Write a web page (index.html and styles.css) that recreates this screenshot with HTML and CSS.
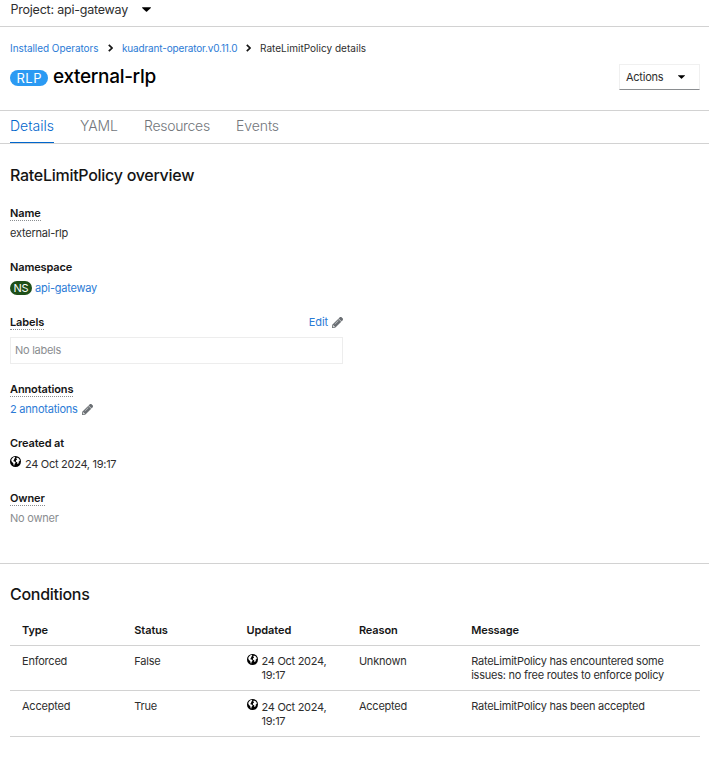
FILE: index.html
```html
<!DOCTYPE html>
<html lang="en">
<head>
<meta charset="utf-8">
<title>external-rlp · Details</title>
<link rel="stylesheet" href="styles.css">
</head>
<body>
<svg class="sprite" aria-hidden="true">
  <symbol id="caret" viewBox="0 0 10 5"><path d="M.4 0h9.2q.6.2.2.7L5.6 4.7q-.6.5-1.2 0L.2.7Q-.2.2.4 0z"/></symbol>
  <symbol id="angle" viewBox="0 0 5 8"><path d="M.8.8 4 4 .8 7.2" fill="none" stroke="currentColor" stroke-width="1.7"/></symbol>
  <symbol id="pencil" viewBox="0 0 512 512"><path d="M497.900 142.100l-46.100 46.100c-4.700 4.700-12.300 4.700-17 0l-111-111c-4.700-4.700-4.700-12.300 0-17l46.100-46.100c18.700-18.700 49.100-18.700 67.900 0l60.100 60.100c18.800 18.700 18.800 49.100 0 68zM284.200 99.800L21.600 362.400.400 483.900c-2.900 16.400 11.400 30.600 27.800 27.800l121.500-21.300 262.600-262.600c4.700-4.700 4.700-12.300 0-17l-111-111c-4.800-4.700-12.400-4.700-17.100 0zM124.100 339.900c-5.500-5.500-5.500-14.300 0-19.800l154-154c5.500-5.500 14.300-5.500 19.800 0s5.500 14.300 0 19.800l-154 154c-5.500 5.500-14.300 5.500-19.800 0zM88 424h48v36.300l-64.500 11.300-31.100-31.100L51.700 376H88v48z"/></symbol>
  <symbol id="globe" viewBox="0 0 11 11"><circle cx="5.500" cy="5.500" r="5.500"/><path fill="#fff" d="M1.500 3.300 3.300 1.300 5 1.100 5.200 2 4 3.100 4.300 4.100 3.200 4.700 3.500 5.300 5.100 5.700 5.600 6.700 4.500 8.100 4.300 9.600 3.600 9.300 3.300 7.300 2.300 6.200 1.300 5zM6.800 1.500 8.600 2.200 9.700 3.800 9.800 5.300 8.900 5.100 8.700 6.900 7.800 8 7.300 7.700 7.200 6.200 6 5.700 5.900 4.400 7.100 3.500 6.300 2.700z"/></symbol>
</svg>

<div class="project-bar">
  <span>Project: api-gateway</span>
  <svg class="caret-lg"><use href="#caret"/></svg>
</div>

<header class="page-header">
  <nav class="breadcrumb">
    <a class="crumb-1">Installed Operators</a>
    <svg class="angle"><use href="#angle"/></svg>
    <a class="crumb-2">kuadrant-operator.v0.11.0</a>
    <svg class="angle"><use href="#angle"/></svg>
    <span>RateLimitPolicy details</span>
  </nav>
  <div class="title-row">
    <span class="badge badge-rlp">RLP</span>
    <h1>external-rlp</h1>
    <button class="actions"><span>Actions</span><svg class="caret-sm"><use href="#caret"/></svg></button>
  </div>
</header>

<nav class="tabs">
  <a class="tab active">Details</a>
  <a class="tab yaml">YAML</a>
  <a class="tab resources">Resources</a>
  <a class="tab">Events</a>
</nav>

<section class="overview">
  <h2>RateLimitPolicy overview</h2>
  <dl>
    <dt><span class="help">Name</span></dt>
    <dd>external-rlp</dd>
    <dt><span>Namespace</span></dt>
    <dd class="with-badge"><span class="badge badge-ns">NS</span><a>api-gateway</a></dd>
    <dt class="labels-head"><span class="help">Labels</span><a class="edit">Edit<svg class="pencil"><use href="#pencil"/></svg></a></dt>
    <dd class="label-box">No labels</dd>
    <dt><span class="help">Annotations</span></dt>
    <dd class="annotations"><a class="edit">2 annotations<svg class="pencil"><use href="#pencil"/></svg></a></dd>
    <dt><span>Created at</span></dt>
    <dd class="created"><svg class="globe"><use href="#globe"/></svg><span class="date">24 Oct 2024, 19:17</span></dd>
    <dt><span class="help">Owner</span></dt>
    <dd class="muted">No owner</dd>
  </dl>
</section>

<section class="conditions">
  <h2>Conditions</h2>
  <table>
    <thead>
      <tr><th>Type</th><th>Status</th><th>Updated</th><th>Reason</th><th class="message">Message</th></tr>
    </thead>
    <tbody>
      <tr>
        <td>Enforced</td><td>False</td>
        <td><div class="stamp"><svg class="globe"><use href="#globe"/></svg><span class="date">24 Oct 2024, 19:17</span></div></td>
        <td>Unknown</td><td>RateLimitPolicy has encountered some<br>issues: no free routes to enforce policy</td>
      </tr>
      <tr class="last">
        <td>Accepted</td><td>True</td>
        <td><div class="stamp"><svg class="globe"><use href="#globe"/></svg><span class="date">24 Oct 2024, 19:17</span></div></td>
        <td>Accepted</td><td>RateLimitPolicy has been accepted</td>
      </tr>
    </tbody>
  </table>
</section>
</body>
</html>
```
FILE: styles.css
```css
* { box-sizing: border-box; }
body {
  margin: 0;
  background: #fff;
  color: #2e2e2e;
  font: 400 11px/16px Inter, "Open Sans", sans-serif;
  letter-spacing: -0.22px;
}
h1, h2, dl, dd { margin: 0; }
svg { display: block; flex: none; overflow: visible; }
.sprite { position: absolute; width: 0; height: 0; }
a { color: #2b7bd6; }

.project-bar {
  display: flex;
  gap: 14px;
  height: 27px;
  padding: 2px 10px 0 10.5px;
  border-bottom: 1px solid #d2d2d2;
  font-size: 12.5px;
  letter-spacing: -0.22px;
}
.caret-lg { width: 9px; height: 5px; margin: 5px 0 0; }

.page-header { height: 84px; padding: 14px 9px 0 10px; border-bottom: 1px solid #d2d2d2; }
.breadcrumb { display: flex; align-items: center; height: 16px; margin-top: -1px; font-size: 10px; letter-spacing: 0.02px; }
.crumb-1 { width: 98px; letter-spacing: -0.06px; }
.crumb-2 { width: 124px; margin-left: 9px; letter-spacing: -0.16px; }
.breadcrumb span { margin-left: 9px; }
.angle { width: 5px; height: 8px; color: #151515; }
.title-row { display: flex; align-items: center; height: 26px; margin-top: 8px; }
h1 { margin-left: 5px; font-size: 19px; font-weight: 450; line-height: 24px; letter-spacing: -0.32px; color: #000; }
.badge { display: block; flex: none; color: #fff; text-align: center; }
.badge-rlp { width: 38px; height: 16px; margin-top: 2px; border-radius: 8px; background: #2b9af3; font-size: 13px; line-height: 16px; letter-spacing: 0.6px; text-indent: 0.6px; }
.badge-ns { width: 22px; height: 14px; border-radius: 7px; background: #1e4f18; font-size: 11px; line-height: 14px; }
.actions {
  display: flex;
  align-items: center;
  justify-content: space-between;
  width: 81px;
  height: 26px;
  margin-left: auto;
  padding: 0 14px 0 6px;
  border: 1px solid #f0f0f0;
  border-bottom-color: #8a8d90;
  background: #fff;
  color: #2e2e2e;
  font: inherit;
  letter-spacing: -0.25px;
}
.caret-sm { width: 7px; height: 4px; color: #151515; }

.tabs { display: flex; gap: 26px; height: 33px; padding: 0 10px; border-bottom: 1px solid #d2d2d2; font-size: 14px; line-height: 30px; }
.tab { height: 32px; color: #72767b; font-weight: 350; letter-spacing: -0.08px; }
.tab.active { width: 44px; color: #06c; border-bottom: 1px solid #06c; letter-spacing: 0; }
.yaml { width: 38px; }
.resources { width: 66px; letter-spacing: -0.3px; }

h2 { font-size: 16px; font-weight: 450; line-height: 20px; letter-spacing: -0.28px; color: #151515; }
.overview { height: 420px; padding: 21px 10px 0; border-bottom: 1px solid #d2d2d2; }
dl { width: 333px; margin-top: 20px; }
dt { display: flex; height: 16px; font-weight: 600; letter-spacing: -0.12px; color: #151515; }
.help { height: 16px; border-bottom: 1px dotted #8a8d90; }
dd { height: 16px; margin: 4px 0 18px; }
.with-badge { display: flex; align-items: center; gap: 3px; margin: 5px 0 18px; }
.labels-head { justify-content: space-between; }
.edit { display: inline-flex; align-items: center; gap: 4px; font-weight: 400; }
.pencil { width: 11px; height: 11px; fill: #6a6e73; stroke: #6a6e73; stroke-width: 16; }
.label-box { height: 27px; margin: 7px 0 17px; padding: 0 4px; border: 1px solid #ededed; line-height: 25px; color: #8a8d90; letter-spacing: -0.27px; }
.created { display: flex; gap: 4px; margin: 5px 0 18px; }
.globe { width: 11px; height: 11px; }
.date { letter-spacing: -0.29px; }
.muted { color: #8a8d90; }

.conditions { padding: 20px 9px 0 10px; }
table { width: 690px; margin-top: 11px; border-collapse: separate; border-spacing: 0; table-layout: fixed; line-height: 14px; }
th, td { padding: 0 12px; text-align: left; vertical-align: top; border-bottom: 1px solid #d2d2d2; }
th { width: 112.3px; height: 31px; padding-top: 8px; font-weight: 600; letter-spacing: -0.1px; color: #151515; }
.message { width: auto; }
td { height: 45px; padding-top: 8px; }
.last td { height: 46px; }
td:last-child { padding-right: 0; letter-spacing: -0.24px; }
.stamp { display: flex; gap: 4px; width: 84px; }
.last .date { padding-top: 1px; }
```
